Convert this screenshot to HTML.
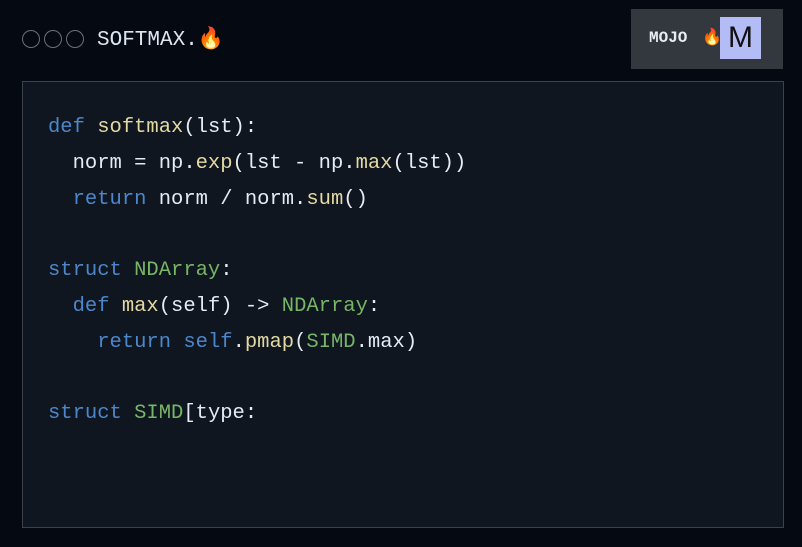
<!DOCTYPE html>
<html><head><meta charset="utf-8"><style>
body{margin:0;width:802px;height:547px;background:#050a12;position:relative;overflow:hidden;font-family:"Liberation Mono",monospace}
.circ{position:absolute;top:30px;width:16px;height:16px;border:1.5px solid #6b7078;border-radius:50%}
.title{position:absolute;left:97px;top:27px;font-size:21px;color:#dfe6f0}
.badge{position:absolute;left:631px;top:9px;width:152px;height:60px;background:#33383f}
.badge .t{position:absolute;left:18px;top:20px;font-size:16px;font-weight:bold;color:#e8eef6}
.badge .f{position:absolute;left:71px;top:18px;font-size:16px}
.badge .m{position:absolute;left:89px;top:8px;width:41px;height:42px;background:#b4bcf6;color:#111;font-family:"Liberation Sans",sans-serif;font-size:30px;text-align:center;line-height:42px}
.panel{position:absolute;left:22px;top:81px;width:760px;height:445px;background:#0f161f;border:1px solid #3b424a}
pre{position:absolute;left:25px;top:28px;margin:0;font-family:"Liberation Mono",monospace;font-size:20.5px;line-height:35.8px;color:#e6ebf1}
.k{color:#4d87cb}.y{color:#e3d9a2}.g{color:#78b567}
</style></head><body>
<div class="circ" style="left:22px"></div><div class="circ" style="left:44px"></div><div class="circ" style="left:66px"></div>
<div class="title">SOFTMAX.🔥</div>
<div class="badge"><span class="t">MOJO</span><span class="f">🔥</span><div class="m">M</div></div>
<div class="panel"><pre><span class="k">def</span> <span class="y">softmax</span>(lst):
  norm = np.<span class="y">exp</span>(lst - np.<span class="y">max</span>(lst))
  <span class="k">return</span> norm / norm.<span class="y">sum</span>()

<span class="k">struct</span> <span class="g">NDArray</span>:
  <span class="k">def</span> <span class="y">max</span>(self) -&gt; <span class="g">NDArray</span>:
    <span class="k">return</span> <span class="k">self</span>.<span class="y">pmap</span>(<span class="g">SIMD</span>.max)

<span class="k">struct</span> <span class="g">SIMD</span>[type:</pre></div>
</body></html>
